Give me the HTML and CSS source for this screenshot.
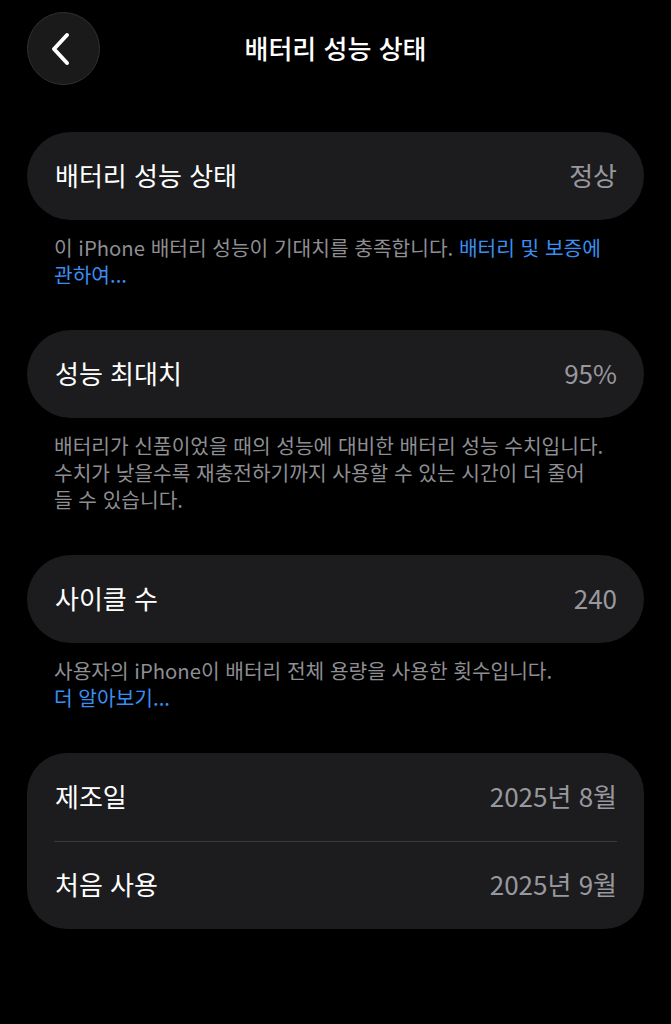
FILE: index.html
```html
<!DOCTYPE html>
<html lang="ko">

<head>
  <meta charset="UTF-8">
  <title>배터리 성능 상태</title>
  <meta name="viewport" content="width=device-width, initial-scale=1.0">
  <link rel="stylesheet" href="styles.css">
</head>

<body>

  <div class="nav-bar">
    <button class="back-btn" aria-label="뒤로">
      <svg width="20" height="34" viewBox="0 0 20 34">
        <path d="M16 3 L3 17 L16 31" fill="none" stroke="#fff" stroke-width="4" stroke-linecap="round" stroke-linejoin="round" />
      </svg>
    </button>
    <h1 class="nav-title">배터리 성능 상태</h1>
  </div>

  <div class="section">
    <div class="group">
      <div class="row">
        <span class="row-label">배터리 성능 상태</span>
        <span class="row-value">정상</span>
      </div>
    </div>
    <p class="footer-text">이 iPhone 배터리 성능이 기대치를 충족합니다. <a href="#">배터리 및 보증에 관하여...</a></p>
  </div>

  <div class="section">
    <div class="group">
      <div class="row">
        <span class="row-label">성능 최대치</span>
        <span class="row-value">95%</span>
      </div>
    </div>
    <p class="footer-text">배터리가 신품이었을 때의 성능에 대비한 배터리 성능 수치입니다. 수치가 낮을수록 재충전하기까지 사용할 수 있는 시간이 더 줄어<br>들 수 있습니다.</p>
  </div>

  <div class="section">
    <div class="group">
      <div class="row">
        <span class="row-label">사이클 수</span>
        <span class="row-value">240</span>
      </div>
    </div>
    <p class="footer-text">사용자의 iPhone이 배터리 전체 용량을 사용한 횟수입니다. <br><a href="#">더 알아보기...</a></p>
  </div>

  <div class="section">
    <div class="group group-multi">
      <div class="row">
        <span class="row-label">제조일</span>
        <span class="row-value">2025년 8월</span>
      </div>
      <div class="row">
        <span class="row-label">처음 사용</span>
        <span class="row-value">2025년 9월</span>
      </div>
    </div>
  </div>

</body>

</html>
```

FILE: styles.css
```css
:root {
  --bg: #000;
  --cell: #1c1c1e;
  --label: #fff;
  --secondary: #8e8e93;
  --value: #98989e;
  --link: #3a8ef0;
  --separator: #3a3a3c;
}

* {
  box-sizing: border-box;
  margin: 0;
  padding: 0;
}

body {
  font-family: "Noto Sans CJK KR", "Noto Sans", sans-serif;
  background: var(--bg);
  color: var(--label);
  width: 671px;
  min-height: 1024px;
  padding: 12px 27px 0;
}

.nav-bar {
  display: flex;
  align-items: center;
  height: 73px;
  position: relative;
  margin-bottom: 47px;
}

.back-btn {
  width: 73px;
  height: 73px;
  border-radius: 50%;
  background: #1a1a1b;
  border: 1px solid #303032;
  display: flex;
  align-items: center;
  justify-content: center;
  padding-right: 6px;
  cursor: pointer;
}

.nav-title {
  position: absolute;
  left: 0;
  right: 0;
  text-align: center;
  font-size: 26px;
  font-weight: 500;
  padding-bottom: 3px;
  pointer-events: none;
}

.section {
  margin-bottom: 42px;
}

.group {
  background: var(--cell);
  border-radius: 44px;
  overflow: hidden;
}

.group-multi {
  border-radius: 40px;
}

.row {
  display: flex;
  justify-content: space-between;
  align-items: center;
  height: 88px;
  padding: 0 27px 4px 28px;
  font-size: 26px;
}

.group-multi .row + .row {
  border-top: 1px solid var(--separator);
  margin: 0 27px;
  padding-left: 1px;
  padding-right: 0;
}

.row-value {
  color: var(--value);
}

.footer-text {
  padding: 14px 30px 0 27px;
  font-size: 20.3px;
  line-height: 27px;
  color: var(--secondary);
}

.footer-text a {
  color: var(--link);
  text-decoration: none;
}
```
